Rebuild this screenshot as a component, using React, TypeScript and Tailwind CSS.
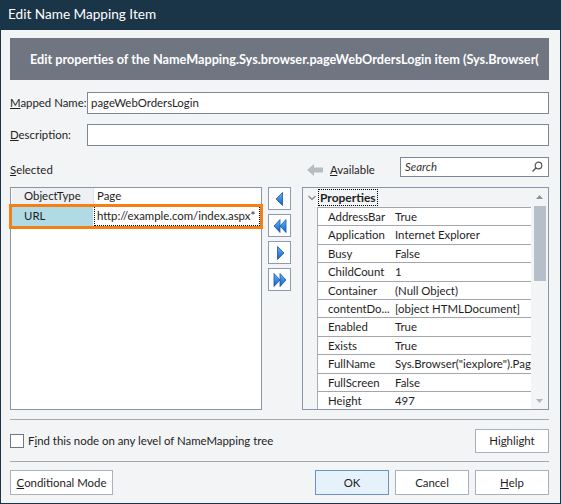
import React from "react";

const Tri = ({ kind }: { kind: "l" | "ll" | "r" | "rr" }) => {
  const paths: Record<string, string[]> = {
    l: ["M10.5 1.5 L4 8 L10.5 14.5 Z"],
    ll: ["M8 1.5 L2 8 L8 14.5 Z", "M14 1.5 L8 8 L14 14.5 Z"],
    r: ["M5.5 1.5 L12 8 L5.5 14.5 Z"],
    rr: ["M2 1.5 L8 8 L2 14.5 Z", "M8 1.5 L14 8 L8 14.5 Z"],
  };
  const id = "g" + kind;
  return (
    <svg width="16" height="16" viewBox="0 0 16 16">
      <defs>
        <linearGradient id={id} x1="0" y1="0" x2="0" y2="1">
          <stop offset="0" stopColor="#6cb4f4" />
          <stop offset="1" stopColor="#0f5fc4" />
        </linearGradient>
      </defs>
      {paths[kind].map((d, i) => (
        <path key={i} d={d} fill={`url(#${id})`} stroke="#1557a8" strokeWidth="0.8" strokeLinejoin="round" />
      ))}
    </svg>
  );
};

const props: [string, string][] = [
  ["AddressBar", "True"],
  ["Application", "Internet Explorer"],
  ["Busy", "False"],
  ["ChildCount", "1"],
  ["Container", "(Null Object)"],
  ["contentDo...", "[object HTMLDocument]"],
  ["Enabled", "True"],
  ["Exists", "True"],
  ["FullName", 'Sys.Browser("iexplore").Page("http'],
  ["FullScreen", "False"],
  ["Height", "497"],
];

export default function App() {
  return (
    <div className="w-[561px] h-[504px] bg-[#1b3548] flex flex-col text-[11.4px] leading-none text-[#1e1e1e] font-['Lato',sans-serif] overflow-hidden">
      <div className="h-[30px] shrink-0 flex items-center pl-[8px] text-white text-[13.6px]">Edit Name Mapping Item</div>
      <div className="flex-1 bg-[#f3f4f6] mx-[1px] mb-[1px] pl-[9px] pr-[11px] flex flex-col min-w-0">
        {/* banner */}
        <div className="mt-[8px] h-[42px] shrink-0 bg-[#6f7682] flex items-center pl-[20px] text-[12.7px] text-white font-bold whitespace-nowrap overflow-hidden">
          Edit properties of the NameMapping.Sys.browser.pageWebOrdersLogin item (Sys.Browser(
        </div>
        {/* mapped name */}
        <div className="mt-[12px] h-[22px] shrink-0 flex items-center">
          <div className="w-[77px] shrink-0 whitespace-nowrap">
            <span className="underline">M</span>apped Name:
          </div>
          <div className="flex-1 h-full border border-[#7d8897] bg-white flex items-center pl-[3px]">pageWebOrdersLogin</div>
        </div>
        {/* description */}
        <div className="mt-[10px] h-[22px] shrink-0 flex items-center">
          <div className="w-[77px] shrink-0 whitespace-nowrap">
            <span className="underline">D</span>escription:
          </div>
          <div className="flex-1 h-full border border-[#7d8897] bg-white" />
        </div>
        {/* labels row */}
        <div className="mt-[11px] h-[20px] shrink-0 flex items-center">
          <div className="w-[258px] shrink-0 pt-[6px]">
            <span className="underline">S</span>elected
          </div>
          <div className="ml-[38px] flex items-center pt-[6px]">
            <svg width="18" height="14" viewBox="0 0 18 14">
              <path d="M1 7 L8 1 L8 4.5 L17 4.5 L17 9.5 L8 9.5 L8 13 Z" fill="#b7bbc2" />
            </svg>
            <span className="ml-[6px]">
              <span className="underline">A</span>vailable
            </span>
          </div>
          <div className="ml-auto w-[149px] h-[20px] border border-[#7d8897] bg-white flex items-center pl-[4px] pr-[5px]">
            <span className="italic text-[#333]">Search</span>
            <svg className="ml-auto" width="12" height="12" viewBox="0 0 12 12">
              <circle cx="7.5" cy="4.5" r="3.3" fill="none" stroke="#555" strokeWidth="1.2" />
              <path d="M5.2 6.8 L1.5 10.5" stroke="#555" strokeWidth="1.4" />
            </svg>
          </div>
        </div>
        {/* lists */}
        <div className="mt-[10px] h-[223px] shrink-0 flex">
          {/* left list */}
          <div className="relative w-[252px] shrink-0 border border-[#8a96a6] bg-white">
            <div className="flex h-[17px] border-b border-[#e1e4e8]">
              <div className="w-[81px] bg-[#eef0f3] flex items-center pl-[12px] ml-[1px]">ObjectType</div>
              <div className="flex-1 flex items-center pl-[3px] border-l border-[#e1e4e8]">Page</div>
            </div>
            <div className="flex h-[21px] pt-[1px]">
              <div className="w-[81px] ml-[1px] bg-[#b0dbe4] flex items-center pl-[12px]">URL</div>
              <div className="flex-1 min-w-0 ml-[1px] mr-[1px] flex items-center pl-[2px] border border-dotted border-black whitespace-nowrap overflow-hidden">
                http://example.com/index.aspx*
              </div>
            </div>
            <div className="absolute left-[-2px] top-[16px] w-[254px] h-[25px] border-[3px] border-[#f57f17]" />
          </div>
          {/* middle buttons */}
          <div className="ml-[6px] w-[23px] shrink-0 flex flex-col gap-[4px]">
            {(["l", "ll", "r", "rr"] as const).map((k) => (
              <div key={k} className="h-[23px] border border-[#8c9cb0] bg-white flex items-center justify-center">
                <Tri kind={k} />
              </div>
            ))}
          </div>
          {/* right list */}
          <div className="ml-[11px] w-[247px] shrink-0 border border-[#8a96a6] bg-[#f3f4f6] flex overflow-hidden">
            <div className="flex-1 min-w-0 flex flex-col">
              <div className="h-[19px] shrink-0 flex items-center">
                <svg className="ml-[4px]" width="10" height="10" viewBox="0 0 10 10">
                  <path d="M1.5 3 L5 6.5 L8.5 3" fill="none" stroke="#7a7f86" strokeWidth="1.1" />
                </svg>
                <span className="ml-[1px] font-bold text-[12px] border border-dotted border-black px-[1px] h-[17px] flex items-center">Properties</span>
              </div>
              <div className="flex-1 ml-[14px] border-l border-[#a8acb2] flex flex-col">
                {props.map(([n, v]) => (
                  <div key={n} className="h-[18.4px] shrink-0 flex border-t border-[#a3a7ad] bg-white">
                    <div className="w-[74px] shrink-0 pl-[10px] flex items-center whitespace-nowrap overflow-hidden">{n}</div>
                    <div className="flex-1 min-w-0 pl-[3px] flex items-center whitespace-nowrap overflow-hidden">{v}</div>
                  </div>
                ))}
              </div>
            </div>
            {/* scrollbar */}
            <div className="w-[17px] shrink-0 flex flex-col items-center bg-[#f3f4f6]">
              <div className="h-[18px] flex items-center">
                <svg width="7" height="4" viewBox="0 0 7 4">
                  <path d="M0 4 L3.5 0 L7 4 Z" fill="#8d939a" />
                </svg>
              </div>
              <div className="w-[12px] h-[75px] bg-[#b6bec9]" />
              <div className="flex-1" />
              <div className="h-[16px] flex items-center">
                <svg width="7" height="4" viewBox="0 0 7 4">
                  <path d="M0 0 L3.5 4 L7 0 Z" fill="#b0b5bb" />
                </svg>
              </div>
            </div>
          </div>
        </div>
        {/* separator */}
        <div className="mt-[9px] h-px shrink-0 bg-[#a3a9b1]" />
        {/* checkbox row */}
        <div className="mt-[9px] h-[24px] shrink-0 flex items-center">
          <div className="w-[14px] h-[14px] border border-[#6f7782] bg-white" />
          <span className="ml-[4px]">
            F<span className="underline">i</span>nd this node on any level of NameMapping tree
          </span>
          <div className="ml-auto w-[74px] h-full border border-[#a9b1bc] bg-white flex items-center justify-center">
            Hi<span className="underline">g</span>hlight
          </div>
        </div>
        <div className="mt-[8px] h-px shrink-0 bg-[#a3a9b1]" />
        {/* bottom buttons */}
        <div className="mt-[8px] h-[25px] shrink-0 flex">
          <div className="w-[103px] border border-[#a9b1bc] bg-white flex items-center justify-center">
            <span className="underline">C</span>onditional Mode
          </div>
          <div className="ml-auto w-[74px] border border-[#6a93c4] bg-[#e6f2fb] flex items-center justify-center">OK</div>
          <div className="ml-[6px] w-[74px] border border-[#a9b1bc] bg-white flex items-center justify-center">Cancel</div>
          <div className="ml-[6px] w-[74px] border border-[#a9b1bc] bg-white flex items-center justify-center">
            <span className="underline">H</span>elp
          </div>
        </div>
      </div>
    </div>
  );
}
